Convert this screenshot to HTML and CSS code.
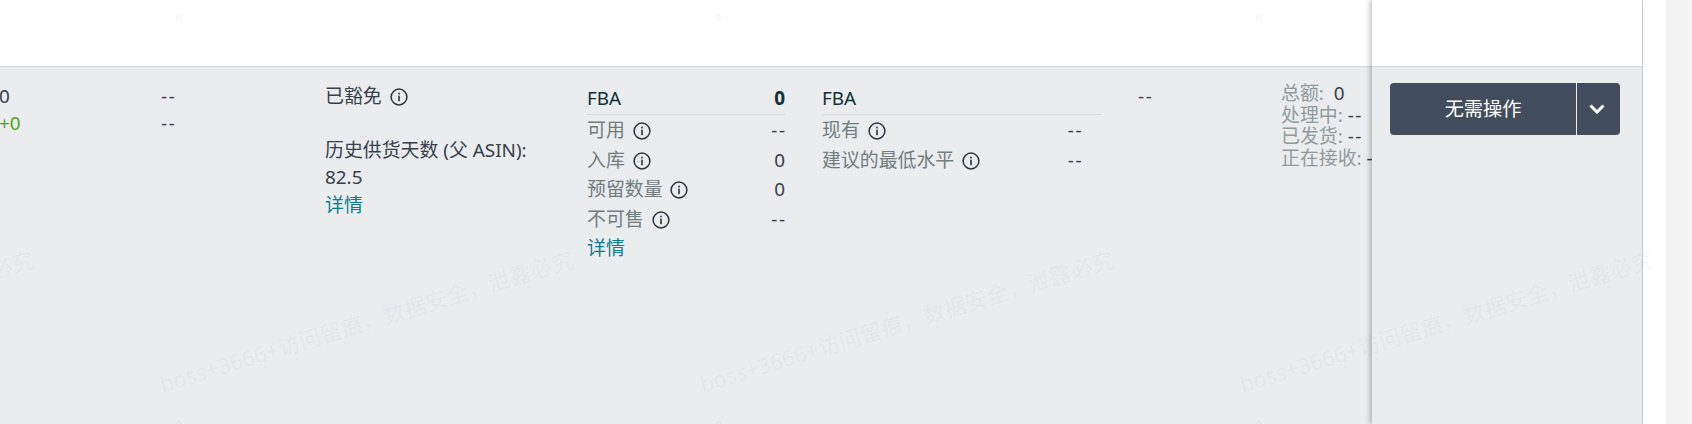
FILE: index.html
```html
<!DOCTYPE html>
<html lang="en">
<head>
  <meta charset="UTF-8" />
  <meta name="viewport" content="width=device-width, initial-scale=1.0" />
  <title>库存</title>
  <link rel="stylesheet" href="styles.css">
</head>
<body>
  <svg class="icon-defs" width="0" height="0" aria-hidden="true">
    <symbol id="info" viewBox="0 0 18 18">
      <circle cx="9" cy="9" r="7.9" fill="none" stroke="currentColor" stroke-width="1.5"/>
      <rect x="8.2" y="7.6" width="1.6" height="5.6" fill="currentColor"/>
      <rect x="8.2" y="4.7" width="1.6" height="1.7" fill="currentColor"/>
    </symbol>
  </svg>

  <div class="page">
    <div class="card">
      <div class="main">
        <div class="top-band"></div>
        <div class="row">
          <div class="col col-first">
            <div class="line">0</div>
            <div class="line positive">+0</div>
          </div>
          <div class="col">
            <div class="line dash">--</div>
            <div class="line dash">--</div>
          </div>
          <div class="col">
            <div class="line">已豁免 <svg class="info"><use href="#info"/></svg></div>
            <div class="line blank"></div>
            <div class="line">历史供货天数 (父 ASIN):</div>
            <div class="line">82.5</div>
            <a class="line link">详情</a>
          </div>
          <div class="col">
            <div class="stock stock-fba">
              <div class="stock-head"><span>FBA</span><b>0</b></div>
              <div class="stock-row"><span class="stock-label">可用 <svg class="info"><use href="#info"/></svg></span><span class="stock-value dash">--</span></div>
              <div class="stock-row"><span class="stock-label">入库 <svg class="info"><use href="#info"/></svg></span><span class="stock-value">0</span></div>
              <div class="stock-row"><span class="stock-label">预留数量 <svg class="info"><use href="#info"/></svg></span><span class="stock-value">0</span></div>
              <div class="stock-row"><span class="stock-label">不可售 <svg class="info"><use href="#info"/></svg></span><span class="stock-value dash">--</span></div>
              <a class="line link">详情</a>
            </div>
          </div>
          <div class="col">
            <div class="stock stock-min">
              <div class="stock-head"><span>FBA</span></div>
              <div class="stock-row"><span class="stock-label">现有 <svg class="info"><use href="#info"/></svg></span><span class="stock-value dash">--</span></div>
              <div class="stock-row"><span class="stock-label">建议的最低水平 <svg class="info"><use href="#info"/></svg></span><span class="stock-value dash">--</span></div>
            </div>
          </div>
          <div class="col">
            <div class="line dash">--</div>
          </div>
          <div class="col shipments">
            <div><span class="muted">总额:</span>&nbsp; 0</div>
            <div><span class="muted">处理中:</span> <span class="dash">--</span></div>
            <div><span class="muted">已发货:</span> <span class="dash">--</span></div>
            <div><span class="muted">正在接收:</span> <span class="dash">--</span></div>
          </div>
        </div>
      </div>

      <div class="action-panel">
        <div class="top-band"></div>
        <div class="actions">
          <div class="split-btn">
            <button class="split-main">无需操作</button>
            <button class="split-caret" aria-label="更多">
              <svg width="16" height="10" viewBox="0 0 16 10"><polyline points="1.5,1.5 8,8 14.5,1.5" fill="none" stroke="#fff" stroke-width="3"/></svg>
            </button>
          </div>
        </div>
      </div>
    </div>
  </div>

  <div class="watermarks" aria-hidden="true">
    <div class="wm-grid">
      <div class="wm-tile"><i class="wm-ring"></i><span class="wm-text">boss+3666+访问留痕，数据安全，泄露必究</span><i class="wm-ring wm-ring-low"></i></div>
      <div class="wm-tile"><i class="wm-ring"></i><span class="wm-text">boss+3666+访问留痕，数据安全，泄露必究</span><i class="wm-ring wm-ring-low"></i></div>
      <div class="wm-tile"><i class="wm-ring"></i><span class="wm-text">boss+3666+访问留痕，数据安全，泄露必究</span><i class="wm-ring wm-ring-low"></i></div>
      <div class="wm-tile"><i class="wm-ring"></i><span class="wm-text">boss+3666+访问留痕，数据安全，泄露必究</span><i class="wm-ring wm-ring-low"></i></div>
    </div>
  </div>
</body>
</html>
```

FILE: styles.css
```css
:root {
  --row-bg: #eaecee;
  --rule: #d5d9dc;
  --text: #37414b;
  --muted: #8f9c9c;
  --label: #6f7f7f;
  --heading: #0f3036;
  --link: #0a7c8c;
  --btn: #414d5c;
}

* {
  margin: 0;
  padding: 0;
  box-sizing: border-box;
}

html, body {
  height: 424px;
  overflow: hidden;
}

body {
  position: relative;
  background: #f3f3f3;
  color: var(--text);
  font-family: "Noto Sans", "Noto Sans CJK SC", sans-serif;
  font-size: 18.9px;
  line-height: 27px;
}

.icon-defs {
  position: absolute;
}

.page {
  width: 1666px;
  height: 424px;
  background: #fff;
}

.card {
  display: flex;
  width: 1643px;
  height: 424px;
  border-right: 1px solid #d0d4d8;
}

.top-band {
  height: 67px;
  background: #fff;
  border-bottom: 1px solid var(--rule);
}

.main {
  flex: 1;
  min-width: 0;
  overflow: hidden;
}

.row {
  display: grid;
  grid-template-columns: 161px 164px 262px 235px 316px 143px 1fr;
  height: 357px;
  padding-top: 16px;
  background: var(--row-bg);
  white-space: nowrap;
}

.col-first {
  margin-left: -1px;
}

.line {
  display: block;
  height: 27px;
}

.dash {
  letter-spacing: 1.6px;
}

.positive {
  color: #4ca81f;
}

.link {
  margin-top: 1px;
  color: var(--link);
}

.info {
  width: 18px;
  height: 18px;
  margin-left: 3px;
  color: #2b3540;
  vertical-align: -3px;
}

.stock-fba {
  width: 198px;
}

.stock-min {
  width: 279px;
}

.stock-min .stock-row {
  padding-right: 19.5px;
}

.stock-head {
  display: flex;
  justify-content: space-between;
  height: 32px;
  border-bottom: 1px solid var(--rule);
  color: var(--heading);
  line-height: 30px;
}

.stock-row {
  display: flex;
  justify-content: space-between;
  height: 27px;
  margin-top: 2.6px;
  color: var(--label);
}

.stock-head + .stock-row {
  margin-top: 2px;
}

.stock-value {
  color: var(--text);
}

.stock-value.dash {
  margin-right: -1.6px;
}

.stock .link {
  margin-top: 2.5px;
}

.shipments {
  overflow: hidden;
  line-height: 21.6px;
}

.muted {
  color: var(--muted);
}

.action-panel {
  position: relative;
  width: 270px;
  flex-shrink: 0;
  box-shadow: -2px 0 5px rgba(0, 0, 0, 0.25);
}

.actions {
  height: 357px;
  padding: 16px 0 0 18px;
  background: var(--row-bg);
}

.split-btn {
  display: flex;
  width: 230px;
  height: 52px;
}

.split-btn button {
  border: none;
  background: var(--btn);
  color: #fff;
  font-family: inherit;
  font-size: 19.2px;
}

.split-main {
  width: 186px;
  padding-bottom: 2px;
  border-radius: 4px 0 0 4px;
}

.split-caret {
  display: flex;
  align-items: center;
  justify-content: center;
  width: 43px;
  margin-left: 1px;
  padding-right: 3px;
  border-radius: 0 4px 4px 0;
}

/* faint repeating stamp across the whole page */
.watermarks {
  position: absolute;
  top: 0;
  left: 0;
  width: 1692px;
  height: 424px;
  overflow: hidden;
  pointer-events: none;
}

.wm-grid {
  display: grid;
  grid-template-columns: repeat(4, 540px);
  width: 2160px;
  height: 424px;
  margin-left: -380px;
}

.wm-tile {
  position: relative;
  height: 424px;
}

.wm-text {
  position: absolute;
  left: 0;
  top: 369px;
  color: rgba(40, 50, 70, 0.055);
  font-size: 22px;
  line-height: 30px;
  white-space: nowrap;
  transform: rotate(-17deg);
  transform-origin: 0 50%;
}

.wm-ring {
  position: absolute;
  left: 556px;
  top: 14px;
  width: 5px;
  height: 6px;
  border: 1.5px solid rgba(40, 50, 70, 0.05);
  border-radius: 50%;
}

.wm-ring-low {
  top: 421px;
}
```
